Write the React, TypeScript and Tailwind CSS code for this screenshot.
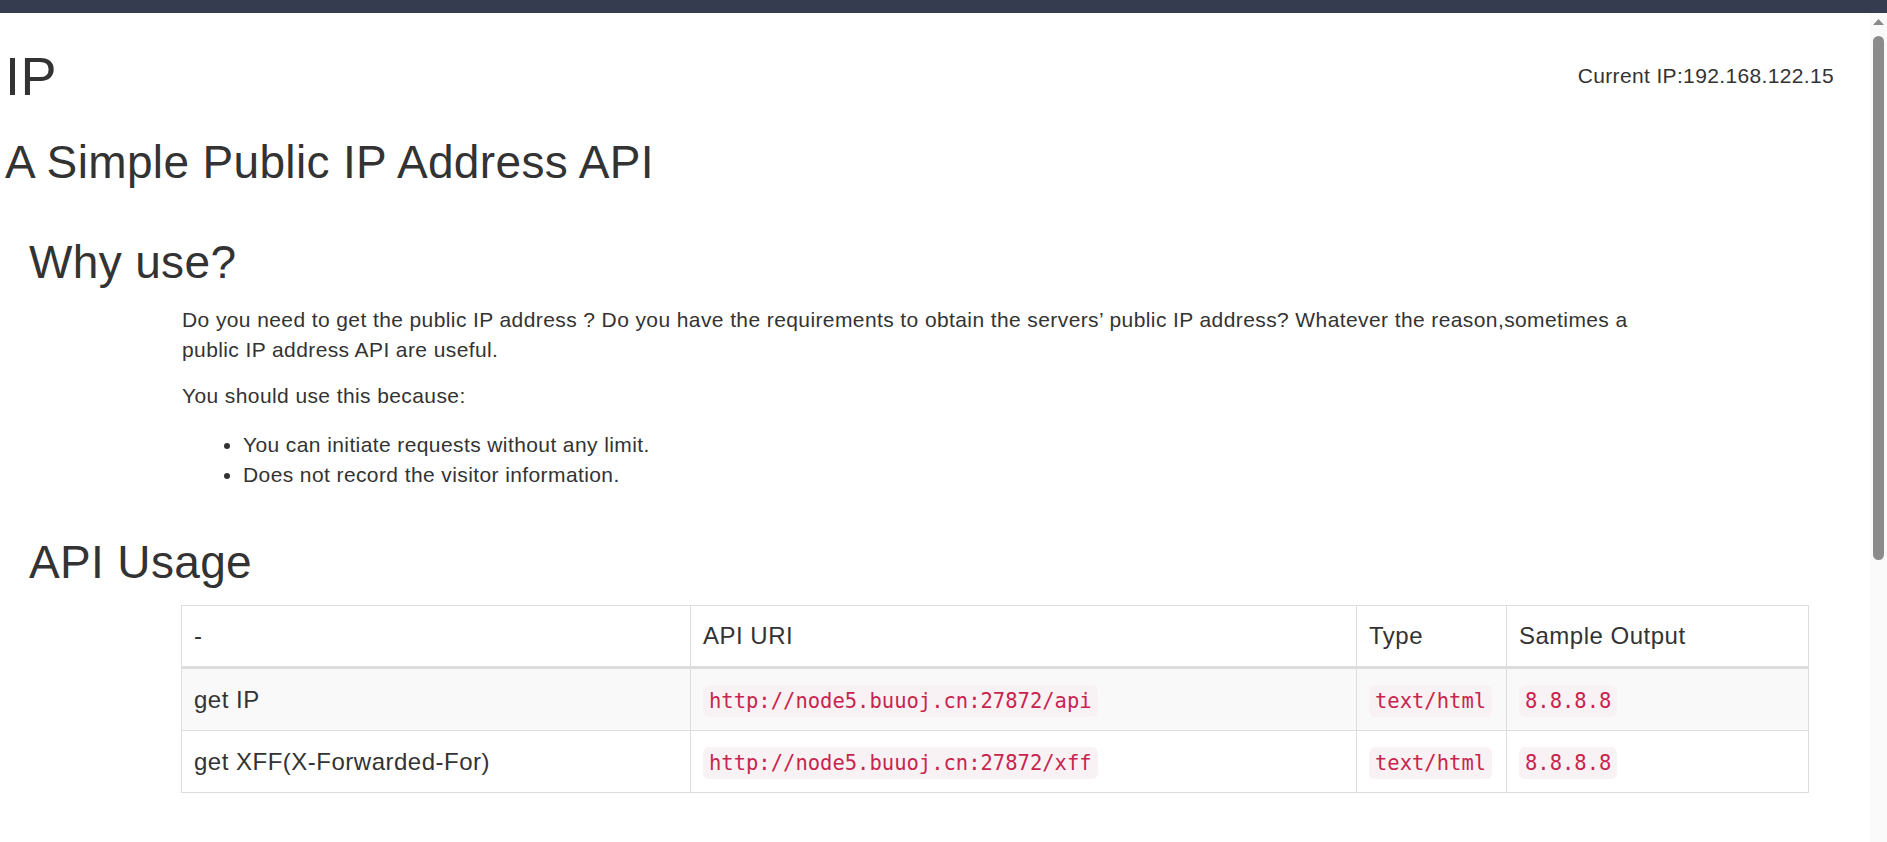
const rows = [
  { name: 'get IP', uri: 'http://node5.buuoj.cn:27872/api', type: 'text/html', sample: '8.8.8.8' },
  { name: 'get XFF(X-Forwarded-For)', uri: 'http://node5.buuoj.cn:27872/xff', type: 'text/html', sample: '8.8.8.8' },
]

function Code({ children }: { children: string }) {
  return (
    <code className="inline-block rounded-[6px] bg-[#f9f2f4] px-[6px] py-[3px] font-['DejaVu_Sans_Mono','Liberation_Mono',monospace] text-[20.5px] leading-[26px] tracking-normal text-[#c7254e]">
      {children}
    </code>
  )
}

function Scrollbar() {
  return (
    <div className="flex w-[17px] shrink-0 flex-col items-center bg-[#fafafa]">
      <svg width="11" height="6" viewBox="0 0 11 6" className="mt-[6px]">
        <path d="M5.5 0 L11 6 L0 6 Z" fill="#8b8b8b" />
      </svg>
      <div className="mt-[11px] h-[524px] w-[11px] rounded-full bg-[#8b8b8b]" />
    </div>
  )
}

export default function App() {
  const cell = 'border border-[#ddd] px-[12px] py-[12px] text-left align-middle font-normal'
  return (
    <div className="flex h-screen flex-col overflow-hidden bg-white font-['Liberation_Sans',Arial,sans-serif] text-[#333]">
      <div className="h-[13px] shrink-0 bg-[#363c50]" />
      <div className="flex min-h-0 flex-1">
        <main className="min-w-0 flex-1 pl-[5px] pr-[36px]">
          <header className="flex items-start justify-between pt-[33px]">
            <h1 className="text-[54px] leading-[60px] tracking-[0.6px]">IP</h1>
            <p className="mt-[15px] text-[21px] leading-[30px] tracking-[0.35px]">Current IP:192.168.122.15</p>
          </header>
          <h2 className="mt-[31px] text-[46px] leading-[50px] tracking-[0.35px]">A Simple Public IP Address API</h2>

          <section className="pl-[24px]">
            <h2 className="mt-[50px] text-[46px] leading-[50px] tracking-[0.35px]">Why use?</h2>
            <div className="ml-[152px] text-[21px] leading-[30px] tracking-[0.4px]">
              <p className="mt-[18px] max-w-[1500px] pl-[1px]">
                Do you need to get the public IP address ? Do you have the requirements to obtain the servers’ public IP
                address? Whatever the reason,sometimes a public IP address API are useful.
              </p>
              <p className="mt-[16px] pl-[1px]">You should use this because:</p>
              <ul className="mt-[19px] list-disc pl-[62px]">
                <li>You can initiate requests without any limit.</li>
                <li>Does not record the visitor information.</li>
              </ul>
            </div>

            <h2 className="mt-[47px] text-[46px] leading-[50px] tracking-[0.35px]">API Usage</h2>
            <div className="ml-[152px] mt-[18px]">
              <table className="w-[1628px] table-fixed border-collapse border border-[#ddd] text-[24px] leading-[36px] tracking-[0.5px]">
                <colgroup>
                  <col className="w-[509px]" />
                  <col className="w-[666px]" />
                  <col className="w-[150px]" />
                  <col />
                </colgroup>
                <thead>
                  <tr>
                    <th className={`${cell} border-b-[3px]`}>-</th>
                    <th className={`${cell} border-b-[3px]`}>API URI</th>
                    <th className={`${cell} border-b-[3px]`}>Type</th>
                    <th className={`${cell} border-b-[3px]`}>Sample Output</th>
                  </tr>
                </thead>
                <tbody className="leading-[37px]">
                  {rows.map((r, i) => (
                    <tr key={r.uri} className={i % 2 === 0 ? 'bg-[#f9f9f9]' : 'bg-white'}>
                      <td className={cell}>{r.name}</td>
                      <td className={cell}>
                        <Code>{r.uri}</Code>
                      </td>
                      <td className={cell}>
                        <Code>{r.type}</Code>
                      </td>
                      <td className={cell}>
                        <Code>{r.sample}</Code>
                      </td>
                    </tr>
                  ))}
                </tbody>
              </table>
            </div>
          </section>
        </main>
        <Scrollbar />
      </div>
    </div>
  )
}
